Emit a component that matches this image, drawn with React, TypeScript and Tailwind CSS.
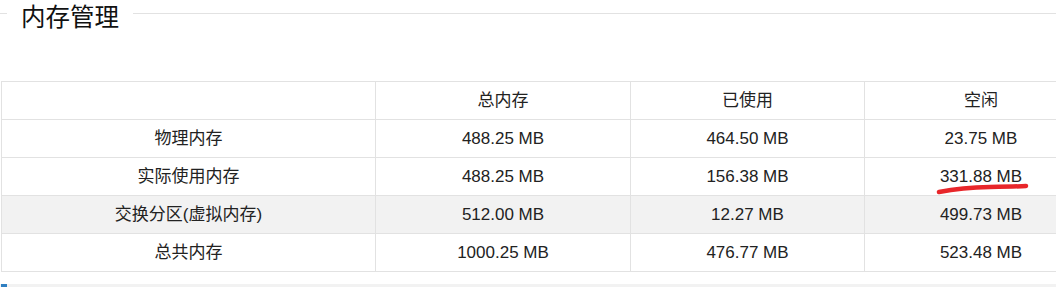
import React from "react";

const rows = [
  { name: "物理内存", total: "488.25 MB", used: "464.50 MB", free: "23.75 MB", bg: "" },
  { name: "实际使用内存", total: "488.25 MB", used: "156.38 MB", free: "331.88 MB", bg: "" },
  { name: "交换分区(虚拟内存)", total: "512.00 MB", used: "12.27 MB", free: "499.73 MB", bg: "bg-[#f2f2f2]" },
  { name: "总共内存", total: "1000.25 MB", used: "476.77 MB", free: "523.48 MB", bg: "" },
];

const cell = "border border-[#e2e2e2] h-[38px] p-0 text-center align-middle font-normal";

export default function App() {
  return (
    <div
      className="relative w-[1056px] h-[287px] overflow-hidden bg-white text-[#222]"
      style={{ fontFamily: '"Liberation Sans", "Noto Sans CJK SC", sans-serif' }}
    >
      <div className="flex items-start h-[31px]">
        <div className="mt-[13px] w-[7px] h-px bg-[#e2e2e2]" />
        <div
          className="mt-[3px] px-[14px] text-[24.5px] leading-[26px] text-[#111]"
          style={{ fontFamily: '"Noto Sans CJK SC", sans-serif' }}
        >
          内存管理
        </div>
        <div className="mt-[13px] flex-1 h-px bg-[#e2e2e2]" />
      </div>
      <div className="mt-[50px] pl-[1px]">
        <table className="border-collapse table-fixed w-[1096px] text-[17px]">
          <colgroup>
            <col className="w-[374px]" />
            <col className="w-[255px]" />
            <col className="w-[234px]" />
            <col className="w-[233px]" />
          </colgroup>
          <thead>
            <tr>
              <th className={cell}></th>
              <th className={cell}>总内存</th>
              <th className={cell}>已使用</th>
              <th className={cell}>空闲</th>
            </tr>
          </thead>
          <tbody>
            {rows.map((r) => (
              <tr key={r.name} className={r.bg}>
                <td className={cell}>{r.name}</td>
                <td className={cell}>{r.total}</td>
                <td className={cell}>{r.used}</td>
                <td className={cell}>{r.free}</td>
              </tr>
            ))}
          </tbody>
        </table>
      </div>
      <div className="mt-[12px] h-[3px] bg-[#f2f2f2] flex">
        <div className="ml-[1px] w-[6px] h-[3px] bg-[#2f7fc1]" />
      </div>
      <svg className="absolute left-0 top-0 pointer-events-none" width="1056" height="287">
        <path
          d="M 939 192 Q 962 187.5 990 187 T 1026 186"
          stroke="#e8262a"
          strokeWidth="4.5"
          strokeLinecap="round"
          fill="none"
        />
      </svg>
    </div>
  );
}
